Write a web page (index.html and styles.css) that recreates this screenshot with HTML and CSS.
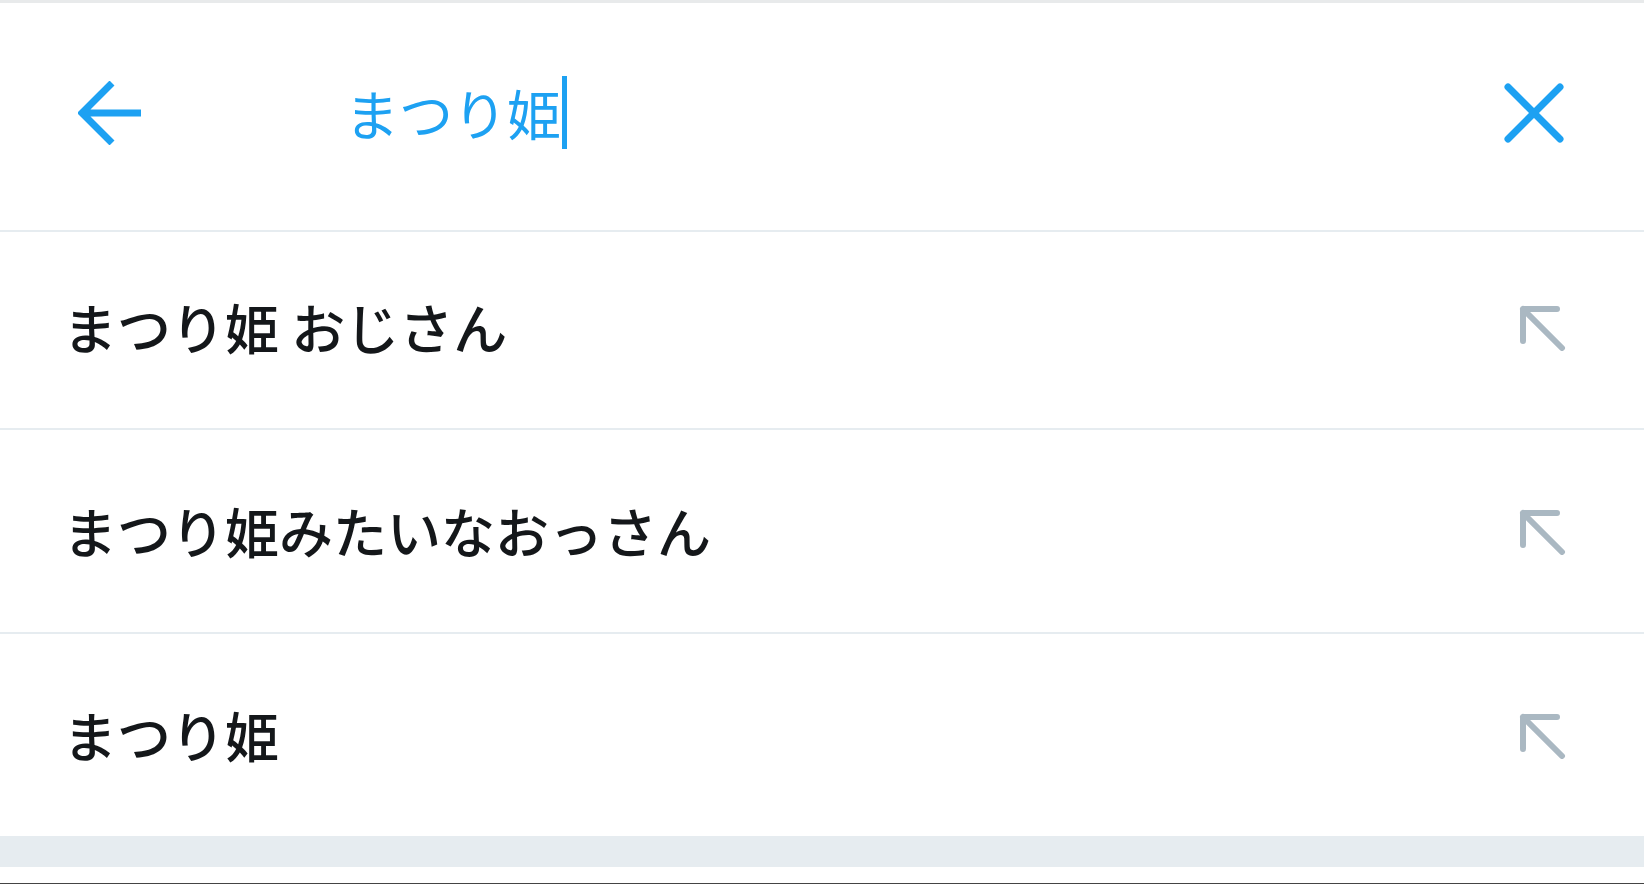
FILE: index.html
```html
<!DOCTYPE html>
<html lang="ja">
<head>
<meta charset="utf-8">
<title>検索</title>
<link rel="stylesheet" href="styles.css">
</head>
<body>
<div class="app">
  <div class="topstrip"></div>
  <header class="search-bar">
    <button class="icon-btn back" aria-label="戻る">
      <svg width="64" height="64" viewBox="0 0 64 64"><path d="M34 2 L4 32 L34 62 M4 32 H63" fill="none" stroke="#1da1f2" stroke-width="7"/></svg>
    </button>
    <div class="query"><span class="query-text">まつり姫</span><span class="caret"></span></div>
    <button class="icon-btn clear" aria-label="クリア">
      <svg width="64" height="64" viewBox="0 0 64 64"><path d="M6 6 L58 58 M58 6 L6 58" fill="none" stroke="#1da1f2" stroke-width="7" stroke-linecap="round"/></svg>
    </button>
  </header>
  <ul class="suggestions">
    <li class="suggestion first"><span class="s-text">まつり姫 おじさん</span>
      <svg class="fill-icon" width="48" height="48" viewBox="0 0 48 48"><path d="M39 6 H5 V38 M5 6 L44 45" fill="none" stroke="#aab8c2" stroke-width="6" stroke-linecap="round" stroke-linejoin="round"/></svg></li>
    <li class="suggestion"><span class="s-text">まつり姫みたいなおっさん</span>
      <svg class="fill-icon" width="48" height="48" viewBox="0 0 48 48"><path d="M39 6 H5 V38 M5 6 L44 45" fill="none" stroke="#aab8c2" stroke-width="6" stroke-linecap="round" stroke-linejoin="round"/></svg></li>
    <li class="suggestion last"><span class="s-text">まつり姫</span>
      <svg class="fill-icon" width="48" height="48" viewBox="0 0 48 48"><path d="M39 6 H5 V38 M5 6 L44 45" fill="none" stroke="#aab8c2" stroke-width="6" stroke-linecap="round" stroke-linejoin="round"/></svg></li>
  </ul>
  <div class="band"></div>
  <div class="footer-space"></div>
</div>
</body>
</html>
```

FILE: styles.css
```css
* { box-sizing: border-box; }
html, body { margin: 0; padding: 0; background: #ffffff; }
body {
  font-family: "Noto Sans CJK JP", "Noto Sans", sans-serif;
  width: 1644px;
  height: 884px;
  overflow: hidden;
}
.app { display: flex; flex-direction: column; height: 884px; }
.topstrip { height: 3px; background: #e8eaeb; flex: none; }
.search-bar {
  height: 229px;
  flex: none;
  display: flex;
  align-items: center;
  padding: 0 78px 8px 78px;
  border-bottom: 2px solid #e6ecf0;
}
.icon-btn {
  border: 0;
  background: none;
  padding: 0;
  width: 64px;
  height: 64px;
  display: block;
  flex: none;
}
.icon-btn svg { display: block; }
.query {
  flex: 1;
  display: flex;
  align-items: center;
  margin-left: 203px;
}
.query-text {
  color: #1da1f2;
  font-size: 54px;
  line-height: 73px;
  letter-spacing: 0;
}
.caret {
  display: block;
  width: 5px;
  height: 73px;
  background: #1da1f2;
  margin-left: 1px;
}
.suggestions { list-style: none; margin: 0; padding: 0; }
.suggestion {
  display: flex;
  align-items: center;
  justify-content: space-between;
  height: 204px;
  padding: 0 78px 0 63px;
  border-bottom: 2px solid #e6ecf0;
}
.suggestion.first { height: 198px; padding-bottom: 6px; }
.suggestion.last { height: 202px; border-bottom: 0; }
.s-text {
  font-size: 54px;
  font-weight: 500;
  color: #14171a;
  line-height: 1;
}
.fill-icon { display: block; flex: none; }
.band { height: 31px; background: #e6ecf0; flex: none; }
.footer-space { flex: 1; border-bottom: 1px solid #444444; }
```
